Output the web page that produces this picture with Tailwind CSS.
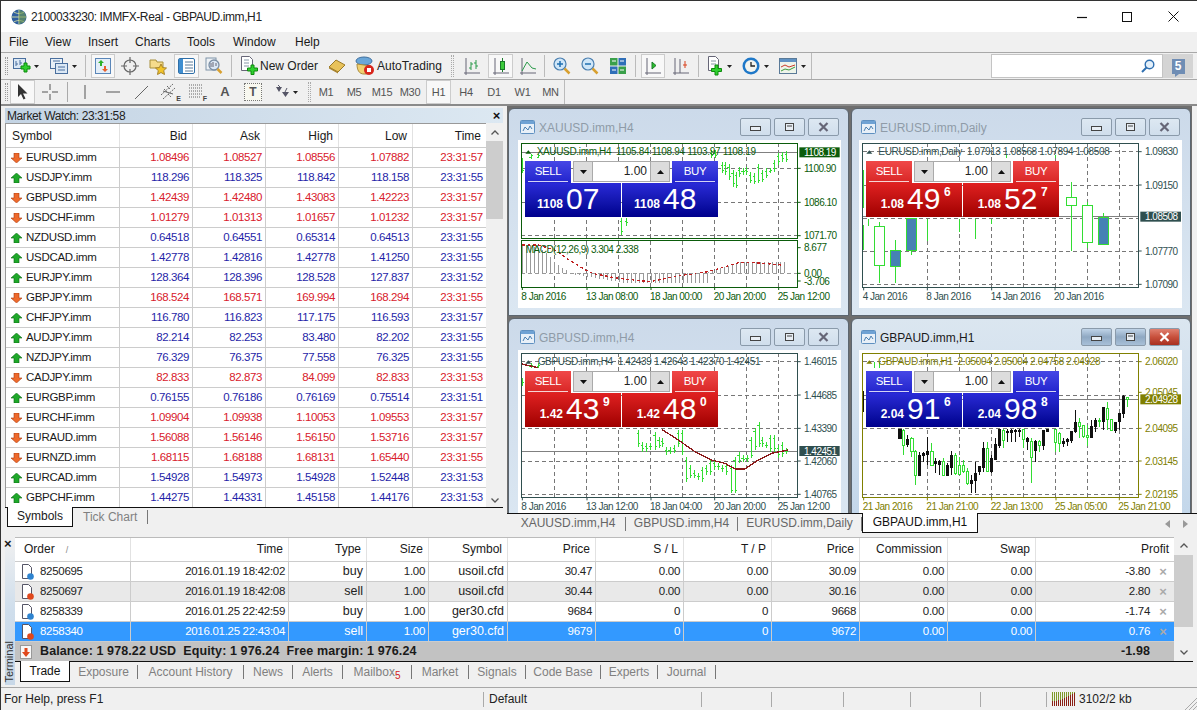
<!DOCTYPE html>
<html lang="en">
<head>
  <meta charset="UTF-8">
  <title>2100033230: IMMFX-Real - GBPAUD.imm,H1</title>
  <script src="https://cdn.jsdelivr.net/npm/@tailwindcss/browser@4"></script>
</head>
<body class="bg-[#f0f0f0] text-[#1a1a1a] text-[12px] font-['Liberation_Sans',sans-serif] overflow-hidden">
<div class="w-[1197px] h-[710px] flex flex-col border-l border-t border-[#333] overflow-hidden">

  <!-- title bar -->
  <div class="h-[31px] bg-white flex items-center shrink-0">
    <svg class="ml-[10px] w-[16px] h-[16px]" viewBox="0 0 16 16"><circle cx="8" cy="8" r="7.5" fill="#2f5f9e"/><path d="M8 .5v15M.5 8h15M3 3c3 2 7 2 10 0M3 13c3-2 7-2 10 0" stroke="#c8d6a0" fill="none"/><path d="M8 1a7 7 0 0 1 0 14z" fill="#6f9a50" opacity=".6"/></svg>
    <span class="ml-[4px] text-[12px] tracking-[-0.4px] text-[#222]">2100033230: IMMFX-Real - GBPAUD.imm,H1</span>
    <svg class="ml-auto mr-[35px] w-[10px] h-[10px]" viewBox="0 0 10 10"><path d="M0 5.5h10" stroke="#111" stroke-width="1.2"/></svg>
    <svg class="mr-[36px] w-[10px] h-[10px]" viewBox="0 0 10 10"><rect x=".5" y=".5" width="9" height="9" fill="none" stroke="#111"/></svg>
    <svg class="mr-[18px] w-[11px] h-[11px]" viewBox="0 0 11 11"><path d="M.5.5l10 10M10.5.5l-10 10" stroke="#111"/></svg>
  </div>

  <!-- menu -->
  <div class="h-[21px] bg-[#f0f0f0] flex items-center text-[12px] shrink-0 border-b border-[#a8a8a8] pl-[8px]">
    <span class="w-[36px]">File</span><span class="w-[43px]">View</span><span class="w-[47px]">Insert</span><span class="w-[52px]">Charts</span><span class="w-[46px]">Tools</span><span class="w-[62px]">Window</span><span>Help</span>
  </div>

  <!-- main toolbar -->
  <div class="h-[27px] flex items-center shrink-0 border-b border-[#a8a8a8] -ml-px">
    <div class="w-[812px] h-full flex items-center border-r border-[#bbb]">
      <div class="ml-[5px] w-[3px] h-[18px] border-x border-dotted border-[#999]"></div>
      <svg class="ml-[5px] w-[18px] h-[18px]" viewBox="0 0 18 18"><rect x=".5" y="1.5" width="12" height="10" fill="#dbe8f5" stroke="#4a6f9e"/><path d="M3 4v5M3 7h2M7 3v5M7 6h2" stroke="#4a6f9e"/><path d="M11 6h3v3h3v3h-3v3h-3v-3H8V9h3z" fill="#2fd02f" stroke="#0d8a0d"/></svg>
      <svg class="ml-[3px] w-[5px] h-[3px]" viewBox="0 0 5 3"><path d="M0 0h5L2.5 3z" fill="#222"/></svg>
      <svg class="ml-[11px] w-[18px] h-[18px]" viewBox="0 0 18 18"><rect x=".5" y="1.5" width="12" height="10" fill="#e8f0f8" stroke="#4a6f9e"/><rect x="5.5" y="6.5" width="12" height="10" fill="#dbe8f5" stroke="#4a6f9e"/><path d="M3 4h7M8 10h7M8 13h7" stroke="#4a6f9e"/></svg>
      <svg class="ml-[4px] w-[5px] h-[3px]" viewBox="0 0 5 3"><path d="M0 0h5L2.5 3z" fill="#222"/></svg>
      <div class="ml-[8px] w-px h-[22px] bg-[#bbb]"></div>
      <div class="ml-[5px] w-[24px] h-[24px] bg-[#f8f8f8] border border-[#ccc] flex items-center justify-center"><svg class="w-[18px] h-[18px]" viewBox="0 0 18 18"><rect x="1.5" y="1.5" width="15" height="15" fill="#e4eef8" stroke="#5a86b8"/><path d="M7 3l3 3H8v3H6V6H4z" fill="#2cb02c"/><path d="M11 15l-3-3h2V9h2v3h2z" fill="#e8602c"/></svg></div>
      <svg class="ml-[6px] w-[18px] h-[18px]" viewBox="0 0 18 18"><circle cx="9" cy="9" r="6" fill="none" stroke="#666" stroke-width="1.2"/><path d="M9 0v6M9 12v6M0 9h6M12 9h6" stroke="#666" stroke-width="1.2"/></svg>
      <svg class="ml-[10px] w-[18px] h-[18px]" viewBox="0 0 18 18"><path d="M1 3h6l1 2h6v6H1z" fill="#f6dc8c" stroke="#a8903c"/><path d="M12 7l1.700 3.600 3.800.4-2.800 2.600.8 3.900-3.500-2-3.500 2 .8-3.900L6.500 11l3.800-.4z" fill="#f2c428" stroke="#a8842c"/></svg>
      <div class="ml-[7px] w-[25px] h-[24px] bg-[#f8f8f8] border border-[#ccc] flex items-center justify-center"><svg class="w-[17px] h-[16px]" viewBox="0 0 17 16"><rect x=".5" y=".5" width="16" height="15" rx="1.500" fill="#fff" stroke="#2f6fa8"/><rect x="1" y="1" width="4" height="14" fill="#3f8ed0"/><path d="M7 4h8M7 7h8M7 10h8M7 13h8" stroke="#5a7a98"/></svg></div>
      <svg class="ml-[6px] w-[18px] h-[18px]" viewBox="0 0 18 18"><rect x="1" y="1" width="10" height="12" fill="#eef2f6" stroke="#7f93a8"/><circle cx="9" cy="8" r="5" fill="#dbe8f5" stroke="#7a8ea4" stroke-width="1.300"/><path d="M6 6v4M8 5v5M11 6v3" stroke="#667"/><path d="M12.500 12l4 4" stroke="#d8a030" stroke-width="2.500"/></svg>
      <div class="ml-[8px] w-px h-[22px] bg-[#bbb]"></div>
      <svg class="ml-[8px] w-[19px] h-[20px]" viewBox="0 0 19 20"><path d="M1.500.5h8l3 3v11h-11z" fill="#fff" stroke="#667"/><path d="M4 4h5M4 7h5M4 10h5" stroke="#8898a8"/><path d="M11 9h3v3h3.500v3H14v3.500h-3V15H7.500v-3H11z" fill="#2fd02f" stroke="#0d8a0d"/></svg>
      <span class="ml-px w-[57px] text-[12px] whitespace-nowrap text-[#222]">New Order</span>
      <svg class="ml-[11px] w-[18px] h-[16px]" viewBox="0 0 18 16"><path d="M1 9l7-7 9 5-7 7z" fill="#e8c25a" stroke="#9a7a28"/><path d="M1 9l9 5v1.500l-9-5z" fill="#a8822c"/></svg>
      <svg class="ml-[9px] w-[20px] h-[20px]" viewBox="0 0 20 20"><ellipse cx="9" cy="5" rx="8" ry="4" fill="#6aa6d8" stroke="#3f6f9e"/><path d="M2 8c0 6 2 10 7 10h4l3-8z" fill="#f0d070" stroke="#a88a3c"/><circle cx="14" cy="14" r="5" fill="#d8261c"/><rect x="12" y="12" width="4" height="4" fill="#fff"/></svg>
      <span class="ml-[2px] w-[67px] text-[12px] whitespace-nowrap text-[#222]">AutoTrading</span>
      <div class="ml-[7px] w-[3px] h-[22px] border-x border-dotted border-[#aaa]"></div>
      <svg class="ml-[9px] w-[18px] h-[18px]" viewBox="0 0 18 18"><path d="M1 16h16M3 1v17" stroke="#667"/><path d="M8 5v8M6 11h2M8 7h2M13 3v9M11 6h2M13 9h2" stroke="#2a9a4a"/></svg>
      <div class="ml-[7px] w-[25px] h-[24px] bg-[#f8f8f8] border border-[#ccc] flex items-center justify-center"><svg class="w-[18px] h-[18px]" viewBox="0 0 18 18"><path d="M1 16h16M3 1v17" stroke="#667"/><rect x="8.500" y="4.500" width="4" height="8" fill="#3ccc3c" stroke="#1a7a2a"/><path d="M10.500 1v3M10.500 13v2" stroke="#1a7a2a"/></svg></div>
      <svg class="ml-[6px] w-[18px] h-[18px]" viewBox="0 0 18 18"><path d="M1 16h16M3 1v17" stroke="#667"/><path d="M3 14l5-9 5 6 4 1" stroke="#2a9a4a" fill="none"/></svg>
      <div class="ml-[7px] w-px h-[22px] bg-[#bbb]"></div>
      <svg class="ml-[8px] w-[18px] h-[18px]" viewBox="0 0 18 18"><circle cx="7" cy="7" r="6" fill="#cfe6f8" stroke="#4a7fb0" stroke-width="1.200"/><path d="M4 7h6M7 4v6" stroke="#1f6fb0" stroke-width="1.500"/><path d="M11.500 11.500l5 5" stroke="#d8a030" stroke-width="2.500"/></svg>
      <svg class="ml-[10px] w-[18px] h-[18px]" viewBox="0 0 18 18"><circle cx="7" cy="7" r="6" fill="#cfe6f8" stroke="#4a7fb0" stroke-width="1.200"/><path d="M4 7h6" stroke="#1f6fb0" stroke-width="1.500"/><path d="M11.500 11.500l5 5" stroke="#d8a030" stroke-width="2.500"/></svg>
      <svg class="ml-[10px] w-[18px] h-[18px]" viewBox="0 0 18 18"><rect x="1" y="1" width="7.500" height="7.500" fill="#3aa04a"/><rect x="9.500" y="1" width="7.500" height="7.500" fill="#2f6fb8"/><rect x="1" y="9.500" width="7.500" height="7.500" fill="#2f6fb8"/><rect x="9.500" y="9.500" width="7.500" height="7.500" fill="#3aa04a"/><path d="M3 4h4M11 4h4M3 13h4M11 13h4" stroke="#fff"/></svg>
      <div class="ml-[8px] w-px h-[22px] bg-[#bbb]"></div>
      <div class="ml-[5px] w-[24px] h-[24px] bg-[#f8f8f8] border border-[#ccc] flex items-center justify-center"><svg class="w-[18px] h-[18px]" viewBox="0 0 18 18"><path d="M1 16h16M3 1v17" stroke="#667"/><path d="M8 5v7l4-3.500z" fill="#2cc02c" stroke="#1a7a2a"/></svg></div>
      <svg class="ml-[7px] w-[18px] h-[18px]" viewBox="0 0 18 18"><path d="M1 16h16M3 1v17M8 2v14" stroke="#667"/><path d="M11 8H15M13 4v7" stroke="#d8401c"/></svg>
      <div class="ml-[8px] w-px h-[22px] bg-[#bbb]"></div>
      <svg class="ml-[7px] w-[18px] h-[20px]" viewBox="0 0 18 20"><path d="M2.500.5h7l3 3v11h-10z" fill="#fff" stroke="#667"/><path d="M5 5h5M5 8h5" stroke="#8898a8"/><path d="M9 9h3v3.500h3.500v3H12V19H9v-3.500H5.500v-3H9z" fill="#2fd02f" stroke="#0d8a0d"/></svg>
      <svg class="ml-[3px] w-[5px] h-[3px]" viewBox="0 0 5 3"><path d="M0 0h5L2.500 3z" fill="#222"/></svg>
      <svg class="ml-[10px] w-[18px] h-[18px]" viewBox="0 0 18 18"><circle cx="9" cy="9" r="8.500" fill="#1f78c8"/><circle cx="9" cy="9" r="6" fill="#f4f4ee"/><path d="M9 5v4h4" stroke="#222" stroke-width="1.300" fill="none"/></svg>
      <svg class="ml-[4px] w-[5px] h-[3px]" viewBox="0 0 5 3"><path d="M0 0h5L2.500 3z" fill="#222"/></svg>
      <svg class="ml-[10px] w-[18px] h-[18px]" viewBox="0 0 18 18"><rect x=".5" y="1.500" width="17" height="15" fill="#eef4ea" stroke="#5a7a98"/><rect x="1" y="2" width="16" height="3" fill="#5f92c4"/><path d="M2 10l4-2 4 2 6-2" stroke="#c83a2a" fill="none"/><path d="M2 14l4-2 4 1 6-3" stroke="#3a9a3a" fill="none"/></svg>
      <svg class="ml-[4px] w-[5px] h-[3px]" viewBox="0 0 5 3"><path d="M0 0h5L2.500 3z" fill="#222"/></svg>
    </div>
    <div class="ml-auto mr-[4px] flex h-[24px]">
      <div class="w-[172px] bg-white border border-[#c4c4c4] flex items-center justify-end pr-[7px]"><svg class="w-[14px] h-[14px]" viewBox="0 0 14 14"><circle cx="8.500" cy="5.500" r="4.300" fill="#e4f0fa" stroke="#2f6fb0" stroke-width="1.400"/><path d="M5.500 8.500L1 13" stroke="#2f6fb0" stroke-width="2"/></svg></div>
      <div class="w-[30px] bg-[#d4d4d4] flex items-center justify-center"><div class="relative w-[13px] h-[15px] bg-[#6f8db4] text-white text-[12px] font-bold leading-[15px] text-center">5<div class="absolute left-[3px] -bottom-[3px] w-0 h-0 border-t-[3px] border-r-[4px] border-t-[#6f8db4] border-r-transparent"></div></div></div>
    </div>
  </div>

  <!-- drawing toolbar -->
  <div class="h-[26px] flex items-center shrink-0 border-b-2 border-[#8a8a8a] -ml-px">
    <div class="w-[565px] h-full flex items-center border-r border-[#bbb] text-[#555]">
      <div class="ml-[5px] w-[3px] h-[18px] border-x border-dotted border-[#999]"></div>
      <div class="ml-[2px] w-[25px] h-[24px] bg-[#f8f8f8] border border-[#ccc] flex items-center justify-center"><svg class="w-[12px] h-[16px]" viewBox="0 0 12 16"><path d="M1 0l9.500 9.500H6l2.500 5-2 1-2.500-5.500L1 13z" fill="#333"/></svg></div>
      <svg class="ml-[6px] w-[18px] h-[18px]" viewBox="0 0 18 18"><path d="M9 1v6M9 11v6M1 9h6M11 9h6" stroke="#555"/></svg>
      <div class="ml-[8px] w-px h-[20px] bg-[#aaa]"></div>
      <svg class="ml-[8px] w-[18px] h-[18px]" viewBox="0 0 18 18"><path d="M9 2v14" stroke="#555"/></svg>
      <svg class="ml-[10px] w-[18px] h-[18px]" viewBox="0 0 18 18"><path d="M2 9h14" stroke="#555"/></svg>
      <svg class="ml-[10px] w-[18px] h-[18px]" viewBox="0 0 18 18"><path d="M3 16L16 3" stroke="#666"/></svg>
      <div class="ml-[10px] relative w-[18px] h-[18px]"><svg class="w-[18px] h-[18px]" viewBox="0 0 18 18"><path d="M1 12L13 1M3 16L15 5M4 6l3 3M7 3l3 3M8 11l3 3" stroke="#666" stroke-dasharray="2 1"/><path d="M3 8l10 3" stroke="#666"/></svg><span class="absolute -right-[3px] -bottom-[1px] text-[7px] font-bold leading-none text-[#444]">E</span></div>
      <div class="ml-[10px] relative w-[18px] h-[18px]"><svg class="w-[18px] h-[18px]" viewBox="0 0 18 18"><path d="M1 2h14M1 5h14M1 8h14M1 11h14M1 14h12" stroke="#666" stroke-dasharray="1 1"/></svg><span class="absolute -right-[1px] -bottom-[1px] text-[7px] font-bold leading-none text-[#444]">F</span></div>
      <span class="ml-[10px] w-[18px] text-center text-[13px] font-bold text-[#555]">A</span>
      <div class="ml-[10px] w-[18px] h-[18px] flex items-center justify-center border border-dotted border-[#777] bg-[#f8f8f0] text-[12px] font-bold text-[#555]">T</div>
      <svg class="ml-[11px] w-[18px] h-[18px]" viewBox="0 0 18 18"><path d="M3 4h6L6 9zM9 9h7l-3.500 5z" fill="#556"/><path d="M5 2l2 2M14 5l-2 4" stroke="#556"/></svg>
      <svg class="ml-[2px] w-[5px] h-[3px]" viewBox="0 0 5 3"><path d="M0 0h5L2.500 3z" fill="#222"/></svg>
      <div class="ml-[10px] w-[3px] h-[20px] border-x border-dotted border-[#aaa]"></div>
      <span class="ml-px w-[28px] text-center text-[11px] tracking-[-0.3px]">M1</span>
      <span class="w-[28px] text-center text-[11px] tracking-[-0.3px]">M5</span>
      <span class="w-[28px] text-center text-[11px] tracking-[-0.3px]">M15</span>
      <span class="w-[28px] text-center text-[11px] tracking-[-0.3px]">M30</span>
      <span class="ml-[2px] w-[25px] h-[24px] leading-[22px] bg-[#f8f8f8] border border-[#ccc] text-center text-[11px] tracking-[-0.3px]">H1</span>
      <span class="ml-px w-[28px] text-center text-[11px] tracking-[-0.3px]">H4</span>
      <span class="w-[28px] text-center text-[11px] tracking-[-0.3px]">D1</span>
      <span class="w-[29px] text-center text-[11px] tracking-[-0.3px]">W1</span>
      <span class="w-[27px] text-center text-[11px] tracking-[-0.3px]">MN</span>
    </div>
  </div>

  <!-- middle: market watch + charts -->
  <div class="h-[431px] flex shrink-0 -ml-px">
    <div class="w-[507px] shrink-0 pl-[5px] pr-[4px] pt-[2px] flex flex-col">
      <div class="h-[15px] shrink-0 bg-gradient-to-r from-[#c4d4e4] to-[#dce8f2] flex items-center pl-[2px] text-[12px] tracking-[-0.4px] leading-none text-[#222]">Market Watch: 23:31:58<span class="ml-auto mr-[3px] font-bold text-[#111] text-[13px]">×</span></div>
      <div class="h-[384px] shrink-0 overflow-hidden flex border-l border-[#999]">
        <div class="w-[480px] bg-white">
          <div class="h-[25px] flex text-[12px] border-t border-[#999] border-b border-b-[#ccc]">
            <div class="w-[114px] pl-[6px] leading-[24px] border-r border-[#e2e2e2]">Symbol</div>
            <div class="w-[73px] pr-[5px] text-right leading-[24px] border-r border-[#e2e2e2]">Bid</div>
            <div class="w-[73px] pr-[5px] text-right leading-[24px] border-r border-[#e2e2e2]">Ask</div>
            <div class="w-[73px] pr-[5px] text-right leading-[24px] border-r border-[#e2e2e2]">High</div>
            <div class="w-[74px] pr-[5px] text-right leading-[24px] border-r border-[#e2e2e2]">Low</div>
            <div class="w-[73px] pr-[5px] text-right leading-[24px]">Time</div>
          </div>
          <div id="mwRows"></div>
        </div>
        <div class="w-[17px] flex flex-col items-center">
          <svg class="mt-[7px] w-[8px] h-[5px]" viewBox="0 0 8 5"><path d="M.5 4.500L4 1l3.500 3.500" fill="none" stroke="#555" stroke-width="1.300"/></svg>
          <div class="mt-[6px] w-full h-[78px] bg-[#cdcdcd]"></div>
          <svg class="mt-auto mb-[4px] w-[8px] h-[5px]" viewBox="0 0 8 5"><path d="M.5.500L4 4l3.500-3.500" fill="none" stroke="#555" stroke-width="1.300"/></svg>
        </div>
      </div>
      <div class="h-[22px] shrink-0 flex border-t border-[#111] text-[12px]">
        <div class="ml-[2px] w-[66px] h-[20px] -mt-px bg-white border-x border-b border-[#111] text-center leading-[19px]">Symbols</div>
        <div class="ml-[10px] text-[#808080] leading-[19px]">Tick Chart</div>
        <div class="ml-[10px] my-[2px] h-[14px] w-px bg-[#777]"></div>
      </div>
    </div>
    <div class="flex-1 flex flex-col min-w-0">
      <div class="h-[407px] flex shrink-0">
        <div id="mdi" class="relative w-[685px] h-full bg-[#6e6e6e] overflow-hidden shrink-0"></div>
      </div>
      <div class="h-[20px] shrink-0 border-t border-[#111] flex text-[12px] text-[#666] leading-[19px]">
        <div class="w-[118px] pl-[4px] text-center">XAUUSD.imm,H4</div>
        <div class="my-[3px] h-[14px] w-px bg-[#777]"></div>
        <div class="w-[111px] text-center">GBPUSD.imm,H4</div>
        <div class="my-[3px] h-[14px] w-px bg-[#777]"></div>
        <div class="w-[123px] text-center">EURUSD.imm,Daily</div>
        <div class="my-[3px] h-[14px] w-px bg-[#777]"></div>
        <div class="w-[116px] h-[20px] -mt-px bg-white border-x border-b border-[#111] text-center text-[#111]">GBPAUD.imm,H1</div>
        <div class="ml-auto mr-[9px] flex items-center gap-[13px]">
          <svg class="w-[5px] h-[8px]" viewBox="0 0 5 8"><path d="M5 0v8L0 4z" fill="#999"/></svg>
          <svg class="w-[5px] h-[8px]" viewBox="0 0 5 8"><path d="M0 0v8l5-4z" fill="#999"/></svg>
        </div>
      </div>
    </div>
  </div>

  <!-- terminal -->
  <div class="h-[148px] flex shrink-0 -ml-px">
    <div class="w-[15px] shrink-0 pl-[5px] relative">
      <div class="h-full bg-gradient-to-b from-[#f0f0f0] via-[#cfdeec] to-[#c8d8e8]"></div>
      <span class="absolute left-[4px] top-0 font-bold text-[13px] leading-[14px]">×</span>
      <span class="absolute left-[4px] bottom-[2px] [writing-mode:vertical-rl] rotate-180 text-[11px] leading-[11px] text-[#333]">Terminal</span>
    </div>
    <div class="flex-1 flex flex-col min-w-0 pr-[4px]">
      <div class="flex h-[124px] shrink-0">
        <div class="flex-1 bg-white">
          <div class="h-[25px] flex text-[12px] border-b border-[#ccc] border-t border-t-[#bbb] bg-white" id="tHead"></div>
          <div id="tRows"></div>
          <div class="h-[19px] bg-[#c2c2c2] flex items-center font-bold text-[12.5px] tracking-[0.1px] relative">
            <svg class="ml-[5px] w-[12px] h-[14px]" viewBox="0 0 12 14"><rect x=".5" y=".5" width="11" height="13" fill="#f8f8f8" stroke="#999"/><path d="M6 12L2 7h2.500V3h3v4H10z" fill="#e0481c"/></svg>
            <span class="ml-[8px] whitespace-pre">Balance: 1 978.22 USD  Equity: 1 976.24  Free margin: 1 976.24</span>
            <span class="absolute right-[24px]">-1.98</span>
          </div>
        </div>
        <div class="w-[19px] flex flex-col items-center">
          <svg class="mt-[6px] w-[8px] h-[5px]" viewBox="0 0 8 5"><path d="M.5 4.500L4 1l3.500 3.500" fill="none" stroke="#555" stroke-width="1.300"/></svg>
          <div class="mt-[7px] w-full h-[72px] bg-[#cdcdcd]"></div>
          <svg class="mt-auto mb-[6px] w-[8px] h-[5px]" viewBox="0 0 8 5"><path d="M.5.500L4 4l3.500-3.500" fill="none" stroke="#555" stroke-width="1.300"/></svg>
        </div>
      </div>
      <div class="h-[24px] shrink-0 border-t border-[#111] flex text-[12px] text-[#808080] leading-[20px]">
        <div class="ml-[5px] w-[50px] h-[21px] -mt-px bg-white border-x border-b border-[#111] text-center text-[#111]">Trade</div>
        <div class="w-[67px] text-center">Exposure</div><div class="my-[3px] h-[14px] w-px bg-[#777]"></div>
        <div class="w-[105px] text-center">Account History</div><div class="my-[3px] h-[14px] w-px bg-[#777]"></div>
        <div class="w-[48px] text-center">News</div><div class="my-[3px] h-[14px] w-px bg-[#777]"></div>
        <div class="w-[49px] text-center">Alerts</div><div class="my-[3px] h-[14px] w-px bg-[#777]"></div>
        <div class="w-[68px] text-center">Mailbox<span class="relative top-[3px] text-[10px] text-[#d02020]">5</span></div><div class="my-[3px] h-[14px] w-px bg-[#777]"></div>
        <div class="w-[56px] text-center">Market</div><div class="my-[3px] h-[14px] w-px bg-[#777]"></div>
        <div class="w-[56px] text-center">Signals</div><div class="my-[3px] h-[14px] w-px bg-[#777]"></div>
        <div class="w-[74px] text-center">Code Base</div><div class="my-[3px] h-[14px] w-px bg-[#777]"></div>
        <div class="w-[56px] text-center">Experts</div><div class="my-[3px] h-[14px] w-px bg-[#777]"></div>
        <div class="w-[57px] text-center">Journal</div><div class="my-[3px] h-[14px] w-px bg-[#777]"></div>
      </div>
    </div>
  </div>

  <!-- status bar -->
  <div class="relative h-[23px] shrink-0 flex items-center border-t border-[#a8a8a8] text-[12px] -ml-px mt-[2px] text-[#222]">
    <div class="w-[483px] pl-[4px]">For Help, press F1</div>
    <div class="w-[218px] h-[15px] border-l border-[#aaa] pl-[5px] leading-[15px]">Default</div>
    <div class="w-[70px] h-[15px] border-l border-[#aaa]"></div>
    <div class="w-[72px] h-[15px] border-l border-[#aaa]"></div>
    <div class="w-[67px] h-[15px] border-l border-[#aaa]"></div>
    <div class="w-[70px] h-[15px] border-l border-[#aaa]"></div>
    <div class="w-[66px] h-[15px] border-l border-[#aaa]"></div>
    <div class="h-[15px] border-l border-[#aaa] pl-[5px] flex items-center gap-[4px] leading-[15px]">
      <svg class="w-[23px] h-[14px]" viewBox="0 0 23 14" shape-rendering="crispEdges"><path d="M.5 0v9M2.500 0v9M4.500 0v9M6.500 0v8M8.500 0v8M10.500 0v7M12.500 0v6M14.500 0v5M16.500 0v4M18.500 0v3M20.500 0v2M22.500 0v1" stroke="#7f9a2a"/><path d="M.5 14v-5M2.500 14v-5M4.500 14v-5M6.500 14v-6M8.500 14v-6M10.500 14v-7M12.500 14v-8M14.500 14v-9M16.500 14v-10M18.500 14v-11M20.500 14v-12M22.500 14v-13" stroke="#8a1f14"/></svg>
      <span>3102/2 kb</span>
    </div>
    <svg class="absolute right-0 bottom-0 w-[13px] h-[13px]" viewBox="0 0 13 13"><path d="M13 1L1 13M13 5L5 13M13 9L9 13" stroke="#aaa"/></svg>
  </div>
</div>

<script>
  // market watch rows: [symbol, up?, bid, ask, high, low, time]
  const mw = [
    ['EURUSD.imm',0,'1.08496','1.08527','1.08556','1.07882','23:31:57'],
    ['USDJPY.imm',1,'118.296','118.325','118.842','118.158','23:31:55'],
    ['GBPUSD.imm',0,'1.42439','1.42480','1.43083','1.42223','23:31:57'],
    ['USDCHF.imm',0,'1.01279','1.01313','1.01657','1.01232','23:31:57'],
    ['NZDUSD.imm',1,'0.64518','0.64551','0.65314','0.64513','23:31:55'],
    ['USDCAD.imm',1,'1.42778','1.42816','1.42778','1.41250','23:31:55'],
    ['EURJPY.imm',1,'128.364','128.396','128.528','127.837','23:31:52'],
    ['GBPJPY.imm',0,'168.524','168.571','169.994','168.294','23:31:55'],
    ['CHFJPY.imm',1,'116.780','116.823','117.175','116.593','23:31:57'],
    ['AUDJPY.imm',1,'82.214','82.253','83.480','82.202','23:31:55'],
    ['NZDJPY.imm',1,'76.329','76.375','77.558','76.325','23:31:55'],
    ['CADJPY.imm',0,'82.833','82.873','84.099','82.833','23:31:53'],
    ['EURGBP.imm',1,'0.76155','0.76186','0.76169','0.75514','23:31:51'],
    ['EURCHF.imm',0,'1.09904','1.09938','1.10053','1.09553','23:31:57'],
    ['EURAUD.imm',0,'1.56088','1.56146','1.56150','1.53716','23:31:57'],
    ['EURNZD.imm',0,'1.68115','1.68188','1.68131','1.65440','23:31:55'],
    ['EURCAD.imm',1,'1.54928','1.54973','1.54928','1.52448','23:31:53'],
    ['GBPCHF.imm',1,'1.44275','1.44331','1.45158','1.44176','23:31:53'],
  ];
  const upArrow = '<svg class="ml-[5px] w-[11px] h-[10px]" viewBox="0 0 11 10"><path d="M5.500 0L11 5H8v5H3V5H0z" fill="#1fa82a" stroke="#0c6a14" stroke-width=".6"/></svg>';
  const downArrow = '<svg class="ml-[5px] w-[11px] h-[10px]" viewBox="0 0 11 10"><path d="M5.500 10L0 5h3V0h5v5h3z" fill="#ee6a2c" stroke="#a83a10" stroke-width=".6"/></svg>';
  document.getElementById('mwRows').innerHTML = mw.map(r => {
    const c = r[1] ? 'text-[#1f1fa8]' : 'text-[#d8202c]';
    const num = 'h-full pr-[3px] text-right border-r border-[#ccc] leading-[19px] text-[11.5px] tracking-[-0.4px]';
    return `<div class="h-[20px] flex items-center border-b border-[#ccc] ${c}">
      <div class="w-[114px] h-full flex items-center border-r border-[#ccc] text-[#1a1a1a]">${r[1] ? upArrow : downArrow}<span class="ml-[4px] text-[11.5px] tracking-[-0.3px]">${r[0]}</span></div>
      <div class="w-[73px] ${num}">${r[2]}</div>
      <div class="w-[73px] ${num}">${r[3]}</div>
      <div class="w-[73px] ${num}">${r[4]}</div>
      <div class="w-[74px] ${num}">${r[5]}</div>
      <div class="w-[73px] h-full pr-[3px] text-right leading-[19px] text-[11.5px] tracking-[-0.25px]">${r[6]}</div>
    </div>`;
  }).join('');

  // terminal table
  const cols = [
    ['Order','w-[116px]'],['Time','w-[158px]'],['Type','w-[78px]'],['Size','w-[62px]'],['Symbol','w-[79px]'],['Price','w-[88px]'],
    ['S / L','w-[88px]'],['T / P','w-[88px]'],['Price','w-[88px]'],['Commission','w-[88px]'],['Swap','w-[88px]'],['Profit','w-[138px]'],
  ];
  document.getElementById('tHead').innerHTML = cols.map((c, i) => i === 0
    ? `<div class="${c[1]} pl-[9px] leading-[23px] border-r border-[#e2e2e2]">Order<span class="ml-[11px] text-[9px] text-[#888]">/</span></div>`
    : i === 11 ? `<div class="${c[1]} pr-[5px] text-right leading-[23px]">${c[0]}</div>`
    : `<div class="${c[1]} pr-[5px] text-right leading-[23px] border-r border-[#e2e2e2]">${c[0]}</div>`).join('');
  const orders = [
    ['8250695','2016.01.19 18:42:02','buy','1.00','usoil.cfd','30.47','0.00','0.00','30.09','0.00','0.00','-3.80'],
    ['8250697','2016.01.19 18:42:08','sell','1.00','usoil.cfd','30.44','0.00','0.00','30.16','0.00','0.00','2.80'],
    ['8258339','2016.01.25 22:42:59','buy','1.00','ger30.cfd','9684','0','0','9668','0.00','0.00','-1.74'],
    ['8258340','2016.01.25 22:43:04','sell','1.00','ger30.cfd','9679','0','0','9672','0.00','0.00','0.76'],
  ];
  const rowBg = ['bg-white text-[#222]','bg-[#e9e9e9] text-[#222]','bg-white text-[#222]','bg-[#3399ff] text-white'];
  document.getElementById('tRows').innerHTML = orders.map((o, n) => {
    const dot = o[2] === 'buy' ? '#2f84d0' : '#e0481c';
    const cells = o.map((v, i) => {
      if (i === 0) return `<div class="${cols[0][1]} h-full flex items-center border-r border-[#ccc]"><svg class="ml-[6px] w-[13px] h-[16px]" viewBox="0 0 13 16"><path d="M1.500.5h6l3 3v11h-9z" fill="#fff" stroke="#556"/><circle cx="9.500" cy="12.500" r="3.300" fill="${dot}"/></svg><span class="ml-[6px] text-[11.5px] tracking-[-0.3px]">${v}</span></div>`;
      if (i === 11) return `<div class="${cols[11][1]} h-full flex items-center justify-end text-[11.5px] tracking-[-0.3px]"><span>${v}</span><span class="ml-[8px] mr-[6px] w-[10px] text-center font-bold text-[#aaa] text-[13px]">×</span></div>`;
      const size = (i === 2 || i === 4) ? 'text-[12.5px]' : 'text-[11.5px] tracking-[-0.3px]';
      return `<div class="${cols[i][1]} h-full pr-[3px] text-right leading-[19px] border-r border-[#ccc] ${size}">${v}</div>`;
    }).join('');
    return `<div class="h-[20px] flex border-b border-[#ccc] ${rowBg[n]}">${cells}</div>`;
  }).join('');

  // chart helpers: all chart coordinates are in 1/3 px units
  const G = '#33dd33';
  const L = (a, b, c, d, col, w = 3, dash = '') => `<line x1="${a}" y1="${b}" x2="${c}" y2="${d}" stroke="${col}" stroke-width="${w}" ${dash ? `stroke-dasharray="${dash}"` : ''}/>`;
  const dashV = (xs, t, b) => xs.map(x => L(x, t, x, b, '#777', 3, '12 9')).join('');
  const dashH = (ys, l, r) => ys.map(y => L(l, y, r, y, '#777', 3, '12 9')).join('');
  const T = (x, y, s, col, ls = -1.5) => `<text x="${x}" y="${y}" font-size="30" letter-spacing="${ls}" fill="${col}">${s}</text>`;
  const bars = list => list.map(b => L(b[0], b[1], b[0], b[2], G, 3) + L(b[0] - 5, b[1] + 10, b[0], b[1] + 10, G, 3) + L(b[0], b[2] - 10, b[0] + 5, b[2] - 10, G, 3)).join('');
  const candle = (x, hi, lo, t, b, fill, hw = 15, edge = G) => L(x, hi, x, lo, edge, 3) + `<rect x="${x - hw}" y="${t}" width="${hw * 2}" height="${b - t}" fill="${fill}" stroke="${edge}" stroke-width="3"/>`;
  const poly = (pts, col, dash = '') => `<polyline points="${pts}" fill="none" stroke="${col}" stroke-width="4" ${dash ? `stroke-dasharray="${dash}"` : ''}/>`;
  const arrowHead = (x, col) => `<path d="M${x - 9} 146 L${x} 136 L${x + 9} 146 Z" fill="${col}"/>`;

  function axes(c) {
    let s = '';
    c.labels.forEach(l => { s += L(c.r, l[0], c.r + 9, l[0], c.col) + T(c.r + 19, l[0] + 11, l[1], c.col); });
    c.dates.forEach(d => { s += L(d[0] + 3, c.b, d[0] + 3, c.b + 9, c.col) + T(d[0], 586, d[1], c.col); });
    return s;
  }
  function tag(c) {
    return `<rect x="${c.r + 5}" y="${c.tag[0] - 15}" width="${c.tagW}" height="30" fill="${c.col}"/>` + T(c.r + 19, c.tag[0] + 11, c.tag[1], '#fff');
  }

  const w1bars = [[52,160,205],[78,148,162],[100,148,160],[350,340,390],[365,340,362],[620,135,160],[630,135,160],[652,170,205],[662,170,210],[672,178,225],[684,195,245],[694,200,250],[704,185,215],[714,190,210],[724,185,210],[737,200,235],[748,205,238],[760,178,235],[772,195,232],[784,190,220],[796,190,205],[808,165,200],[820,145,180],[832,140,170],[845,138,172]];
  const w3bars = [[52,190,212],[78,145,160],[100,145,160],[400,345,395],[412,380,410],[424,385,410],[436,385,405],[450,350,405],[462,365,400],[472,370,395],[484,395,420],[495,395,418],[508,390,415],[520,345,395],[532,345,420],[545,425,500],[556,450,490],[568,465,490],[580,475,495],[592,455,500],[604,450,480],[616,435,480],[628,435,465],[640,445,465],[652,450,470],[664,445,480],[680,450,535],[690,425,535],[702,410,445],[714,420,442],[726,420,440],[738,365,430],[750,340,405],[762,322,395],[772,365,395],[784,380,400],[796,360,410],[808,360,410],[820,390,428],[832,380,425],[845,398,418]];
  const w4c = [[150,343,370,343,370,0],[160,343,420,345,390,1],[172,360,395,372,388,0],[185,365,425,370,408,1],[196,405,510,408,480,1],[208,410,480,420,480,0],[220,410,440,415,422,0],[232,365,450,410,418,0],[245,385,450,410,450,1],[256,430,475,438,445,0],[268,435,480,438,448,0],[280,430,482,438,480,1],[292,445,480,450,480,0],[304,408,480,420,458,0],[316,415,480,422,475,1],[328,425,480,452,478,1],[340,435,475,450,470,1],[352,460,510,468,505,1],[364,480,535,495,505,0],[376,440,535,475,497,0],[388,455,480,455,470,0],[400,380,470,400,458,0],[412,380,470,400,470,1],[424,420,475,430,470,0],[436,370,432,388,432,0],[448,343,400,343,390,0],[460,343,400,345,375,1],[472,343,380,348,352,0],[484,343,380,347,352,0],[496,343,380,345,350,0],[508,343,365,345,348,0],[520,343,400,343,372,1],[532,365,405,370,378,0],[544,370,505,378,428,1],[556,375,440,378,405,0],[568,375,410,380,392,1],[580,345,405,347,390,0],[592,343,350,343,348,0],[616,343,410,343,382,1],[628,350,410,355,385,1],[640,370,395,378,385,0],[652,370,392,373,380,0],[664,350,385,350,375,0],[676,285,355,322,350,0],[688,310,370,322,335,1],[700,330,370,332,365,1],[712,330,392,360,368,1],[724,315,370,333,368,0],[736,310,350,316,335,0],[748,310,335,316,320,1],[760,278,345,278,320,0],[772,262,345,280,312,1],[784,312,345,312,345,1],[796,320,355,322,345,0],[808,295,345,295,320,0],[820,240,310,245,295,0],[832,245,275,248,252,1]];

  function macd() {
    let s = '';
    const h = [420,420,420,425,430,435,445,455,470,480,490,495];
    h.forEach((y, i) => { s += L(52 + i * 12, y, 52 + i * 12, 505, '#9a9a9a'); });
    for (let x = 200; x < 610; x += 12) s += L(x, 505, x, 505 + Math.min(30, (x - 190) / 6), '#9a9a9a');
    for (let x = 610; x < 850; x += 12) s += L(x, 505, x, 505 - Math.min(35, (x - 600) / 3), '#9a9a9a');
    return s + poly('52,420 100,420 150,435 200,470 260,505 340,520 436,530 520,512 610,500 700,473 740,472 830,480', '#c02020', '8 8');
  }

  const charts = [
    { box:'left-[1px] top-[2px] w-[341px] h-[208px]', client:'left-[9px] top-[31px] w-[323px] h-[168px]', btn:'left-[231px]', icon:'left-[11px]', titleX:'left-[30px]', vb:'39 105 969 504', title:'XAUUSD.imm,H4',
      col:'#0b5c0b', kind:'blue', l:49, r:878, b:546, active:false,
      legend:'XAUUSD.imm,H4\u00a0\u00a01105.84 1108.94 1103.97 1108.19', legendX:95, arrowX:70,
      tag:[142,'1108.19'], tagW:121,
      labels:[[190,'1100.90'],[292,'1086.10'],[392,'1071.70'],[428,'8.677'],[505,'0.00'],[528,'-3.706']],
      dates:[[49,'8 Jan 2016'],[243,'13 Jan 08:00'],[435,'18 Jan 00:00'],[626,'20 Jan 20:00'],[818,'25 Jan 12:00']],
      draw(c){ return dashV([148,244,340,436,532,628,724,820],115,400) + dashH([190,292,392],49,878) + dashV([148,244,340,436,532,628,724,820],407,546) + L(49,142,878,142,'#808080') + bars(w1bars) + macd() + L(49,505,878,505,'#999',3,'12 9')
        + `<rect x="49" y="115" width="829" height="285" fill="none" stroke="${c.col}" stroke-width="3"/><rect x="49" y="407" width="829" height="139" fill="none" stroke="${c.col}" stroke-width="3"/>` + T(62,444,'MACD(12,26,9) 3.304 2.338',c.col); },
      prices:['SELL','1108','07','','1108','48',''] },
    { box:'left-[344px] top-[2px] w-[340px] h-[208px]', client:'left-[7px] top-[31px] w-[323px] h-[168px]', btn:'left-[229px]', icon:'left-[9px]', titleX:'left-[28px]', vb:'27 105 969 504', title:'EURUSD.imm,Daily',
      col:'#2f4f4f', kind:'red', l:38, r:866, b:547, active:false,
      legend:'EURUSD.imm,Daily\u00a0\u00a01.07913 1.08568 1.07894 1.08508', legendX:85, arrowX:58,
      tag:[335,'1.08508'], tagW:122,
      labels:[[140,'1.09830'],[240,'1.09150'],[438,'1.07770'],[538,'1.07090']],
      dates:[[38,'4 Jan 2016'],[229,'8 Jan 2016'],[422,'14 Jan 2016'],[612,'20 Jan 2016']],
      prices:['SELL','1.08','49','6','1.08','52','7'],
      draw(c){ return dashV([232,328,424,520,616,712,808],115,547) + dashH([140,240,340,438,538],38,866) + L(38,335,866,335,'#808080')
        + L(40,195,40,310,G,3) + L(40,360,40,435,G,3) + L(56,343,56,362,G,3) + candle(88,350,535,365,480,'#fff') + candle(136,405,535,435,485,'#4682b4') + candle(184,340,450,340,437,'#4682b4') + L(232,343,232,408,G,3) + L(328,343,328,380,G,3) + L(376,343,376,402,G,3) + L(424,343,424,356,G,3) + L(470,150,470,160,G,3) + L(615,150,615,160,G,3)
        + candle(664,232,437,278,300,'#fff') + candle(712,290,428,300,412,'#fff') + candle(760,325,420,336,418,'#4682b4')
        + `<rect x="38" y="115" width="828" height="432" fill="none" stroke="${c.col}" stroke-width="3"/>`; } },
    { box:'left-[1px] top-[212px] w-[341px] h-[210px]', client:'left-[9px] top-[31px] w-[323px] h-[168px]', btn:'left-[231px]', icon:'left-[11px]', titleX:'left-[30px]', vb:'39 105 969 504', title:'GBPUSD.imm,H4',
      col:'#2f4f4f', kind:'red', l:49, r:878, b:547, active:false,
      legend:'GBPUSD.imm,H4\u00a0\u00a01.42439 1.42643 1.42370 1.42451', legendX:98, arrowX:70,
      tag:[408,'1.42451'], tagW:121,
      labels:[[140,'1.46015'],[240,'1.44685'],[340,'1.43390'],[438,'1.42060'],[538,'1.40765']],
      dates:[[49,'8 Jan 2016'],[243,'13 Jan 12:00'],[435,'18 Jan 04:00'],[626,'20 Jan 20:00'],[818,'25 Jan 12:00']],
      prices:['SELL','1.42','43','9','1.42','48','0'],
      draw(c){ return dashV([148,244,340,436,532,628,724,820],115,547) + dashH([140,240,340,438,538],49,878) + L(49,408,878,408,'#808080') + bars(w3bars)
        + poly('470,343 520,375 570,410 620,435 660,445 690,462 720,462 760,435 800,415 848,405','#8b1a1a') + poly('50,147 100,158','#8b1a1a')
        + `<rect x="49" y="115" width="829" height="432" fill="none" stroke="${c.col}" stroke-width="3"/>`; } },
    { box:'left-[344px] top-[212px] w-[340px] h-[210px]', client:'left-[7px] top-[31px] w-[323px] h-[168px]', btn:'left-[229px]', icon:'left-[9px]', titleX:'left-[28px]', vb:'27 105 969 504', title:'GBPAUD.imm,H1',
      col:'#808000', kind:'blue', l:38, r:866, b:547, active:true,
      legend:'GBPAUD.imm,H1\u00a0\u00a02.05004 2.05004 2.04758 2.04928', legendX:85, arrowX:58,
      tag:[253,'2.04928'], tagW:122,
      labels:[[140,'2.06020'],[232,'2.05045'],[340,'2.04095'],[438,'2.03145'],[538,'2.02195']],
      dates:[[38,'21 Jan 2016'],[229,'21 Jan 21:00'],[422,'22 Jan 13:00'],[615,'25 Jan 05:00'],[805,'25 Jan 21:00']],
      prices:['SELL','2.04','91','6','2.04','98','8'],
      draw(c){ return dashV([232,328,424,520,616,712,808],115,547) + dashH([140,240,340,438,538],38,866) + L(38,252,866,252,'#808080')
        + L(72,140,72,160,G,3) + L(88,140,88,158,G,3) + L(40,228,40,290,'#111',3)
        + w4c.map(k => k[5] ? candle(k[0],k[1],k[2],k[3],k[4],'#fff',4,G) : candle(k[0],k[1],k[2],k[3],k[4],'#111',4,'#111')).join('')
        + `<rect x="38" y="115" width="828" height="432" fill="none" stroke="${c.col}" stroke-width="3"/>`; } },
  ];

  const tri = d => d ? '<svg class="w-[7px] h-[4px]" viewBox="0 0 7 4"><path d="M0 0h7L3.500 4z" fill="#111"/></svg>' : '<svg class="w-[7px] h-[4px]" viewBox="0 0 7 4"><path d="M0 4h7L3.500 0z" fill="#111"/></svg>';
  function trade(c) {
    const top = c.kind === 'blue' ? 'from-[#4646e6] to-[#2222cc]' : 'from-[#f04848] to-[#d82424]';
    const low = c.kind === 'blue' ? 'from-[#2a2ad8] to-[#00008c]' : 'from-[#e02020] to-[#a00000]';
    const p = c.prices;
    const block = (a, b, s) => `<div class="w-[96px] h-[34px] bg-gradient-to-b ${low} text-white relative">
        <span class="absolute left-0 top-[14px] w-[38px] text-right text-[12px] font-bold leading-[14px]">${a}</span>
        <span class="absolute left-[41px] top-[-1px] text-[30px] leading-[34px]">${b}</span>
        <span class="absolute left-[78px] top-[2px] text-[12px] font-bold leading-[14px]">${s}</span>
      </div>`;
    const btn = t => `<div class="w-[46px] h-[22px] bg-gradient-to-b ${top} text-white text-[11.5px] tracking-[-0.4px] text-center leading-[21px]"><div class="mx-[3px] h-[21px] border-b border-white/80">${t}</div></div>`;
    return `<div class="absolute left-[7px] top-[21px] w-[193px]">
      <div class="flex justify-between h-[22px]">${btn('SELL')}
        <div class="w-[97px] h-[21px] flex border border-[#aaa] bg-white text-[12px]">
          <div class="w-[19px] bg-[#dcdcdc] border-r border-[#aaa] flex items-center justify-center">${tri(1)}</div>
          <div class="flex-1 text-right pr-[3px] leading-[18px] text-[#222]">1.00</div>
          <div class="w-[19px] bg-[#dcdcdc] border-l border-[#aaa] flex items-center justify-center">${tri(0)}</div>
        </div>${btn('BUY')}</div>
      <div class="flex justify-between">${block(p[1], p[2], p[3])}${block(p[4], p[5], p[6])}</div>
    </div>`;
  }

  const winBtn = (active, close, i) => {
    const base = close && active ? 'from-[#e08070] via-[#c8503c] to-[#a83020]' : active ? 'from-[#c0d4e8] via-[#8fa8c2] to-[#a8c0d8]' : 'from-[#dde8f2] to-[#d0deec]';
    return `<div class="w-[31px] h-[18px] rounded-[2px] border border-[#8a9aaa] bg-gradient-to-b ${base} flex items-center justify-center">${i}</div>`;
  };
  const icoMin = '<svg class="w-[11px] h-[6px] mt-[4px]" viewBox="0 0 11 6"><rect x=".5" y=".5" width="10" height="4" fill="#e8eef4" stroke="#444"/></svg>';
  const icoMax = '<svg class="w-[9px] h-[8px]" viewBox="0 0 9 8"><rect x=".5" y=".5" width="8" height="7" fill="#e8eef4" stroke="#444"/><path d="M2 3h5" stroke="#444"/></svg>';
  const icoCl = a => `<svg class="w-[11px] h-[10px]" viewBox="0 0 11 10"><path d="M1.500 1l8 8M9.500 1l-8 8" stroke="${a ? '#fff' : '#667'}" stroke-width="2.200"/></svg>`;

  document.getElementById('mdi').innerHTML = charts.map(c => {
    const svg = `<svg class="absolute inset-0 w-[323px] h-[168px]" viewBox="${c.vb}" shape-rendering="crispEdges">
        ${c.draw(c)}
        <g shape-rendering="auto">${arrowHead(c.arrowX, c.col)}${T(c.legendX, 150, c.legend, c.col, -1)}${axes(c)}${tag(c)}</g>
      </svg>`;
    return `<div class="absolute ${c.box} rounded-t-[6px] border border-[#5c6670] bg-gradient-to-b ${c.active ? 'from-[#dbe6f0] to-[#c2d6ea]' : 'from-[#ccdaea] to-[#dbe7f2]'}">
      <svg class="absolute ${c.icon} top-[11px] w-[15px] h-[14px]" viewBox="0 0 15 14"><rect x=".5" y=".5" width="14" height="13" rx="1" fill="#e8f0f8" stroke="#5f90c0"/><rect x="1" y="1" width="13" height="3" fill="#6fa2d4"/><path d="M3 11l2-4 3 3 2-4 2 3" fill="none" stroke="#4a7fb0"/></svg>
      <span class="absolute ${c.titleX} top-[10px] text-[12px] ${c.active ? 'text-[#1a1a1a]' : 'text-[#8f9ba8]'}">${c.title}</span>
      <div class="absolute ${c.btn} top-[9px] flex gap-[3px]">${winBtn(c.active,false,icoMin)}${winBtn(c.active,false,icoMax)}${winBtn(c.active,true,icoCl(c.active))}</div>
      <div class="absolute ${c.client} bg-white">${svg}${trade(c)}</div>
    </div>`;
  }).join('');
</script>
</body>
</html>
